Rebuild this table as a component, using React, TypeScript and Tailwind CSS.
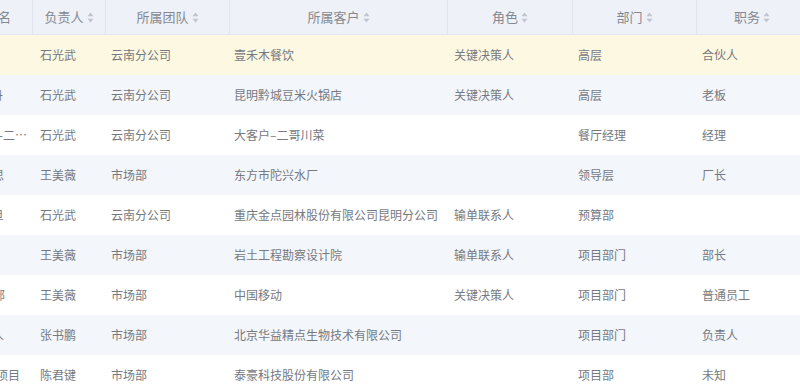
import React from "react";

const SortIcon = () => (
  <svg width="7" height="11" viewBox="0 0 7 11" className="ml-[3px] shrink-0">
    <path d="M3.5 0.5 L6.5 4.2 L0.5 4.2 Z" fill="#c0c4ce" />
    <path d="M3.5 10.5 L6.5 6.8 L0.5 6.8 Z" fill="#c0c4ce" />
  </svg>
);

type Row = {
  c0: string;
  pr0: string;
  owner: string;
  team: string;
  customer: string;
  role: string;
  dept: string;
  title: string;
  bg: string;
};

const rows: Row[] = [
  { c0: "", pr0: "pr-[6px]", owner: "石光武", team: "云南分公司", customer: "壹禾木餐饮", role: "关键决策人", dept: "高层", title: "合伙人", bg: "bg-[#fdf8e1]" },
  { c0: "张丹丹", pr0: "pr-[30px]", owner: "石光武", team: "云南分公司", customer: "昆明黔城豆米火锅店", role: "关键决策人", dept: "高层", title: "老板", bg: "bg-[#f3f6fb]" },
  { c0: "大客户-二…", pr0: "pr-[6px]", owner: "石光武", team: "云南分公司", customer: "大客户–二哥川菜", role: "", dept: "餐厅经理", title: "经理", bg: "bg-white" },
  { c0: "李思思", pr0: "pr-[29px]", owner: "王美薇", team: "市场部", customer: "东方市陀兴水厂", role: "", dept: "领导层", title: "厂长", bg: "bg-[#f3f6fb]" },
  { c0: "刘旦", pr0: "pr-[29px]", owner: "石光武", team: "云南分公司", customer: "重庆金点园林股份有限公司昆明分公司", role: "输单联系人", dept: "预算部", title: "", bg: "bg-white" },
  { c0: "", pr0: "pr-[6px]", owner: "王美薇", team: "市场部", customer: "岩土工程勘察设计院", role: "输单联系人", dept: "项目部门", title: "部长", bg: "bg-[#f3f6fb]" },
  { c0: "市场部", pr0: "pr-[28px]", owner: "王美薇", team: "市场部", customer: "中国移动", role: "关键决策人", dept: "项目部门", title: "普通员工", bg: "bg-white" },
  { c0: "负责人", pr0: "pr-[29px]", owner: "张书鹏", team: "市场部", customer: "北京华益精点生物技术有限公司", role: "", dept: "项目部门", title: "负责人", bg: "bg-[#f3f6fb]" },
  { c0: "泰豪项目", pr0: "pr-[13px]", owner: "陈君键", team: "市场部", customer: "泰豪科技股份有限公司", role: "", dept: "项目部", title: "未知", bg: "bg-white" },
];

const HeadCell = ({ w, label, last }: { w: string; label: string; last?: boolean }) => (
  <div
    className={`${w} shrink-0 h-full flex items-center justify-center ${last ? "" : "border-r border-[#e1e5ee]"}`}
  >
    <span className="text-[13px] text-[#85898f]">{label}</span>
    <SortIcon />
  </div>
);

export default function App() {
  return (
    <div
      className="w-[800px] h-[388px] overflow-hidden bg-white"
      style={{ fontFamily: '"Noto Sans CJK SC", "Noto Sans", sans-serif' }}
    >
      <div className="w-[807px]">
        <div className="h-[35px] flex bg-[#eef1f8] border-b border-[#e3e7ef]">
          <div className="w-[33px] shrink-0 h-full flex items-center justify-end overflow-hidden pr-[21px] border-r border-[#e1e5ee]">
            <span className="text-[13px] text-[#85898f] whitespace-nowrap shrink-0">姓名</span>
          </div>
          <HeadCell w="w-[73px]" label="负责人" />
          <HeadCell w="w-[124px]" label="所属团队" />
          <HeadCell w="w-[218px]" label="所属客户" />
          <HeadCell w="w-[125px]" label="角色" />
          <HeadCell w="w-[124px]" label="部门" />
          <HeadCell w="w-[110px]" label="职务" last />
        </div>
        {rows.map((r, i) => (
          <div key={i} className={`h-[40px] flex items-center text-[12px] text-[#76797f] ${r.bg}`}>
            <div className={`w-[33px] shrink-0 flex justify-end overflow-hidden ${r.pr0}`}>
              <span className="whitespace-nowrap shrink-0">{r.c0}</span>
            </div>
            <div className="w-[73px] shrink-0 pl-[7px] whitespace-nowrap">{r.owner}</div>
            <div className="w-[124px] shrink-0 pl-[5px] whitespace-nowrap">{r.team}</div>
            <div className="w-[218px] shrink-0 pl-[4px] whitespace-nowrap">{r.customer}</div>
            <div className="w-[125px] shrink-0 pl-[6px] whitespace-nowrap">{r.role}</div>
            <div className="w-[124px] shrink-0 pl-[5px] whitespace-nowrap">{r.dept}</div>
            <div className="w-[110px] shrink-0 pl-[5px] whitespace-nowrap">{r.title}</div>
          </div>
        ))}
      </div>
    </div>
  );
}
